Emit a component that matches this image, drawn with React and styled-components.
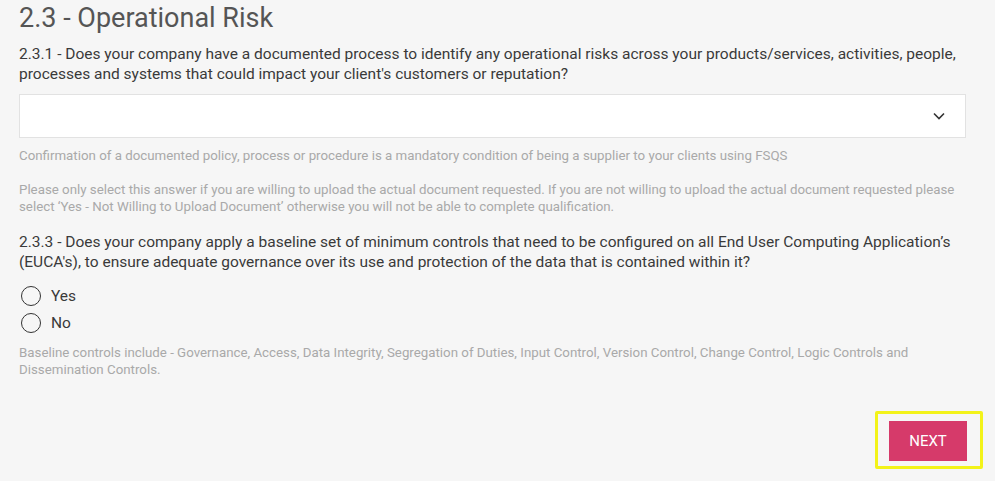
import React from "react";
import styled, { createGlobalStyle } from "styled-components";

const GlobalStyle = createGlobalStyle`
  html, body {
    margin: 0;
    padding: 0;
    background: #f6f6f6;
  }
  body {
    font-family: Roboto, "Liberation Sans", sans-serif;
  }
`;

const Page = styled.div`
  width: 995px;
  height: 481px;
  box-sizing: border-box;
  padding: 0 29px 0 19px;
  background: #f6f6f6;
  overflow: hidden;
`;

const Title = styled.h1`
  margin: 0;
  padding-top: 2px;
  font-size: 27px;
  line-height: 32px;
  font-weight: 400;
  color: #555;
`;

const Question = styled.p`
  margin: ${(p) => p.$top || 0}px 0 0;
  font-size: 15.5px;
  line-height: 20px;
  color: #3a3a3a;
`;

const Select = styled.div`
  margin-top: 10px;
  height: 42px;
  background: #fff;
  border: 1px solid #e2e2e2;
  display: flex;
  align-items: center;
  justify-content: flex-end;
  padding-right: 20px;
`;

const Help = styled.p`
  margin: ${(p) => p.$top || 0}px 0 0;
  font-size: 13.3px;
  line-height: 17px;
  color: #a9a9a9;
`;

const Options = styled.div`
  margin-top: 14px;
  display: flex;
  flex-direction: column;
  gap: 7px;
`;

const Option = styled.label`
  display: flex;
  align-items: center;
  gap: 10px;
  padding-left: 2px;
  font-size: 15.5px;
  line-height: 20px;
  color: #3a3a3a;
`;

const Radio = styled.span`
  box-sizing: border-box;
  width: 20px;
  height: 20px;
  border: 1.7px solid #333;
  border-radius: 50%;
`;

const Footer = styled.div`
  margin-top: 33px;
  display: flex;
  justify-content: flex-end;
`;

const Highlight = styled.div`
  margin-right: -17px;
  padding: 7px 13px 5px 11px;
  border: 3px solid #f3f31a;
  border-radius: 2px;
`;

const NextButton = styled.button`
  display: block;
  width: 78px;
  height: 40px;
  border: none;
  background: #d63a6a;
  color: #fff;
  font-family: Roboto, "Liberation Sans", sans-serif;
  font-size: 15px;
  text-transform: uppercase;
  cursor: pointer;
`;

const Chevron = () => (
  <svg width="12" height="8" viewBox="0 0 12 8" fill="none">
    <path d="M1 1.5L6 6.5L11 1.5" stroke="#333" strokeWidth="1.6" />
  </svg>
);

const App = () => (
  <>
    <GlobalStyle />
    <Page>
      <Title>2.3 - Operational Risk</Title>
      <Question $top={10}>
        2.3.1 - Does your company have a documented process to identify any operational risks across your products/services, activities, people, processes and systems that could impact your client's customers or reputation?
      </Question>
      <Select>
        <Chevron />
      </Select>
      <Help $top={9}>
        Confirmation of a documented policy, process or procedure is a mandatory condition of being a supplier to your clients using FSQS
      </Help>
      <Help $top={17}>
        Please only select this answer if you are willing to upload the actual document requested. If you are not willing to upload the actual document requested please select ‘Yes - Not Willing to Upload Document’ otherwise you will not be able to complete qualification.
      </Help>
      <Question $top={17}>
        2.3.3 - Does your company apply a baseline set of minimum controls that need to be configured on all End User Computing Application’s (EUCA's), to ensure adequate governance over its use and protection of the data that is contained within it?
      </Question>
      <Options>
        <Option>
          <Radio />
          Yes
        </Option>
        <Option>
          <Radio />
          No
        </Option>
      </Options>
      <Help $top={11}>
        Baseline controls include - Governance, Access, Data Integrity, Segregation of Duties, Input Control, Version Control, Change Control, Logic Controls and Dissemination Controls.
      </Help>
      <Footer>
        <Highlight>
          <NextButton>Next</NextButton>
        </Highlight>
      </Footer>
    </Page>
  </>
);

export default App;
